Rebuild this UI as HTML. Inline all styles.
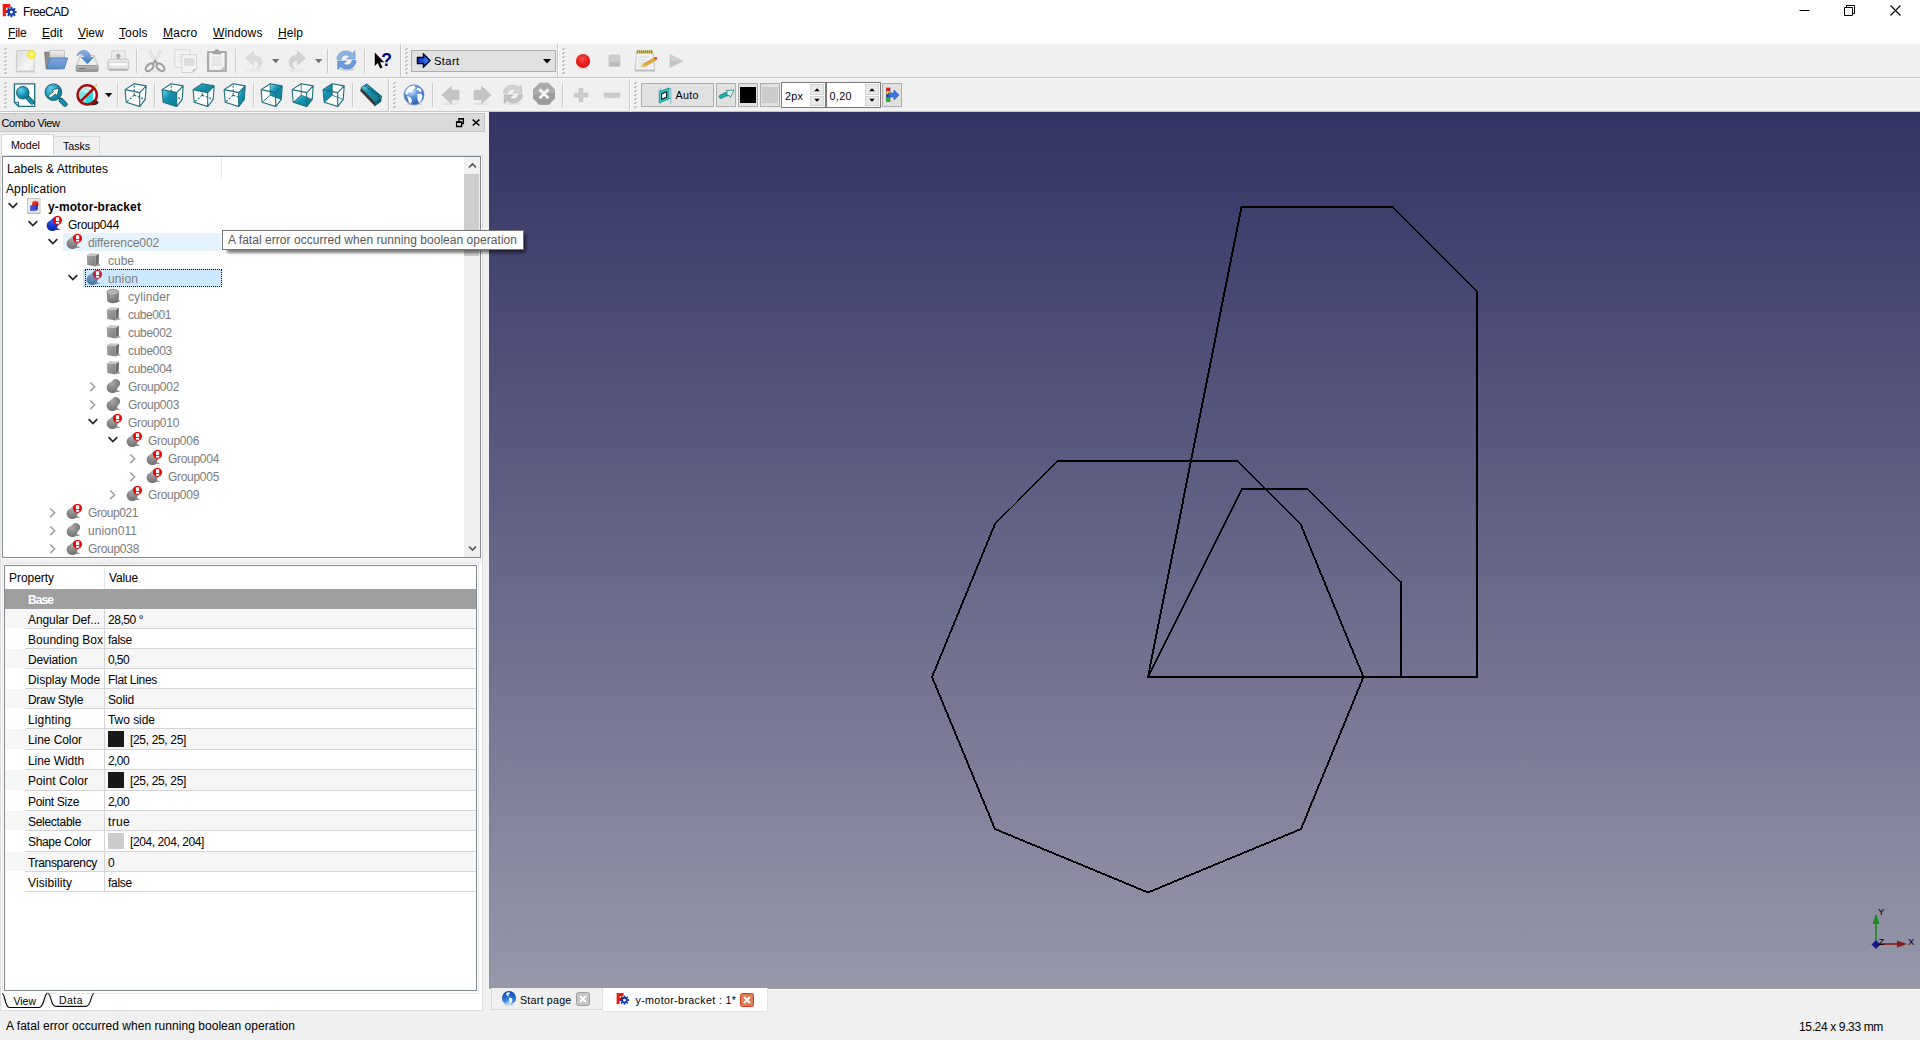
<!DOCTYPE html>
<html><head><meta charset="utf-8"><title>FreeCAD</title>
<style>
html,body{margin:0;padding:0;}
body{width:1920px;height:1040px;overflow:hidden;background:#f0f0f0;position:relative;font-family:"Liberation Sans",sans-serif;font-size:12px;color:#000;}
.t{position:absolute;white-space:nowrap;}
.b{position:absolute;box-sizing:border-box;}
u{text-decoration:underline;text-underline-offset:1px;}
</style></head><body>
<div class="b" style="left:0px;top:0px;width:1920px;height:43px;background:#fff;"></div>
<div class="t" style="left:23px;top:4px;height:16px;line-height:16px;font-size:12px;color:#000;letter-spacing:-0.644px;">FreeCAD</div>
<svg class="b" style="left:1790px;top:0px" width="130" height="22" viewBox="0 0 130 22"><path d="M9.5 10.5h10" stroke="#000" stroke-width="1" fill="none"/>
<path d="M54.5 7.5h8v8h-8z M56.5 7.5v-2h8v8h-2" stroke="#000" stroke-width="1" fill="none"/>
<path d="M100.5 5.5l10 10M110.5 5.5l-10 10" stroke="#000" stroke-width="1.1" fill="none"/></svg>
<div class="t" style="left:8px;top:25px;height:16px;line-height:16px;font-size:12px;color:#000;letter-spacing:-0.209px;"><u>F</u>ile</div>
<div class="t" style="left:42px;top:25px;height:16px;line-height:16px;font-size:12px;color:#000;letter-spacing:-0.045px;"><u>E</u>dit</div>
<div class="t" style="left:78px;top:25px;height:16px;line-height:16px;font-size:12px;color:#000;letter-spacing:-0.073px;"><u>V</u>iew</div>
<div class="t" style="left:119px;top:25px;height:16px;line-height:16px;font-size:12px;color:#000;letter-spacing:0.098px;"><u>T</u>ools</div>
<div class="t" style="left:163px;top:25px;height:16px;line-height:16px;font-size:12px;color:#000;letter-spacing:0.232px;"><u>M</u>acro</div>
<div class="t" style="left:213px;top:25px;height:16px;line-height:16px;font-size:12px;color:#000;letter-spacing:0.117px;"><u>W</u>indows</div>
<div class="t" style="left:278px;top:25px;height:16px;line-height:16px;font-size:12px;color:#000;letter-spacing:0.080px;"><u>H</u>elp</div>
<div class="b" style="left:0px;top:43px;width:1920px;height:1px;background:#fafafa;"></div>
<div class="b" style="left:0px;top:77px;width:1920px;height:1px;background:#c5c5c5;"></div>
<div class="b" style="left:0px;top:78px;width:1920px;height:1px;background:#fafafa;"></div>
<div class="b" style="left:0px;top:111px;width:1920px;height:1px;background:#c5c5c5;"></div>
<div class="b" style="left:0px;top:112px;width:1920px;height:1px;background:#fafafa;"></div>
<div class="b" style="left:5px;top:48px;width:2px;height:1px;background:#c4c4c4;"></div>
<div class="b" style="left:4px;top:49px;width:2px;height:1px;background:#b4b4b4;"></div>
<div class="b" style="left:5px;top:52px;width:2px;height:1px;background:#c4c4c4;"></div>
<div class="b" style="left:4px;top:53px;width:2px;height:1px;background:#b4b4b4;"></div>
<div class="b" style="left:5px;top:56px;width:2px;height:1px;background:#c4c4c4;"></div>
<div class="b" style="left:4px;top:57px;width:2px;height:1px;background:#b4b4b4;"></div>
<div class="b" style="left:5px;top:60px;width:2px;height:1px;background:#c4c4c4;"></div>
<div class="b" style="left:4px;top:61px;width:2px;height:1px;background:#b4b4b4;"></div>
<div class="b" style="left:5px;top:64px;width:2px;height:1px;background:#c4c4c4;"></div>
<div class="b" style="left:4px;top:65px;width:2px;height:1px;background:#b4b4b4;"></div>
<div class="b" style="left:5px;top:68px;width:2px;height:1px;background:#c4c4c4;"></div>
<div class="b" style="left:4px;top:69px;width:2px;height:1px;background:#b4b4b4;"></div>
<div class="b" style="left:5px;top:72px;width:2px;height:1px;background:#c4c4c4;"></div>
<div class="b" style="left:4px;top:73px;width:2px;height:1px;background:#b4b4b4;"></div>
<div class="b" style="left:406px;top:48px;width:2px;height:1px;background:#c4c4c4;"></div>
<div class="b" style="left:405px;top:49px;width:2px;height:1px;background:#b4b4b4;"></div>
<div class="b" style="left:406px;top:52px;width:2px;height:1px;background:#c4c4c4;"></div>
<div class="b" style="left:405px;top:53px;width:2px;height:1px;background:#b4b4b4;"></div>
<div class="b" style="left:406px;top:56px;width:2px;height:1px;background:#c4c4c4;"></div>
<div class="b" style="left:405px;top:57px;width:2px;height:1px;background:#b4b4b4;"></div>
<div class="b" style="left:406px;top:60px;width:2px;height:1px;background:#c4c4c4;"></div>
<div class="b" style="left:405px;top:61px;width:2px;height:1px;background:#b4b4b4;"></div>
<div class="b" style="left:406px;top:64px;width:2px;height:1px;background:#c4c4c4;"></div>
<div class="b" style="left:405px;top:65px;width:2px;height:1px;background:#b4b4b4;"></div>
<div class="b" style="left:406px;top:68px;width:2px;height:1px;background:#c4c4c4;"></div>
<div class="b" style="left:405px;top:69px;width:2px;height:1px;background:#b4b4b4;"></div>
<div class="b" style="left:406px;top:72px;width:2px;height:1px;background:#c4c4c4;"></div>
<div class="b" style="left:405px;top:73px;width:2px;height:1px;background:#b4b4b4;"></div>
<div class="b" style="left:563px;top:48px;width:2px;height:1px;background:#c4c4c4;"></div>
<div class="b" style="left:562px;top:49px;width:2px;height:1px;background:#b4b4b4;"></div>
<div class="b" style="left:563px;top:52px;width:2px;height:1px;background:#c4c4c4;"></div>
<div class="b" style="left:562px;top:53px;width:2px;height:1px;background:#b4b4b4;"></div>
<div class="b" style="left:563px;top:56px;width:2px;height:1px;background:#c4c4c4;"></div>
<div class="b" style="left:562px;top:57px;width:2px;height:1px;background:#b4b4b4;"></div>
<div class="b" style="left:563px;top:60px;width:2px;height:1px;background:#c4c4c4;"></div>
<div class="b" style="left:562px;top:61px;width:2px;height:1px;background:#b4b4b4;"></div>
<div class="b" style="left:563px;top:64px;width:2px;height:1px;background:#c4c4c4;"></div>
<div class="b" style="left:562px;top:65px;width:2px;height:1px;background:#b4b4b4;"></div>
<div class="b" style="left:563px;top:68px;width:2px;height:1px;background:#c4c4c4;"></div>
<div class="b" style="left:562px;top:69px;width:2px;height:1px;background:#b4b4b4;"></div>
<div class="b" style="left:563px;top:72px;width:2px;height:1px;background:#c4c4c4;"></div>
<div class="b" style="left:562px;top:73px;width:2px;height:1px;background:#b4b4b4;"></div>
<div class="b" style="left:5px;top:82px;width:2px;height:1px;background:#c4c4c4;"></div>
<div class="b" style="left:4px;top:83px;width:2px;height:1px;background:#b4b4b4;"></div>
<div class="b" style="left:5px;top:86px;width:2px;height:1px;background:#c4c4c4;"></div>
<div class="b" style="left:4px;top:87px;width:2px;height:1px;background:#b4b4b4;"></div>
<div class="b" style="left:5px;top:90px;width:2px;height:1px;background:#c4c4c4;"></div>
<div class="b" style="left:4px;top:91px;width:2px;height:1px;background:#b4b4b4;"></div>
<div class="b" style="left:5px;top:94px;width:2px;height:1px;background:#c4c4c4;"></div>
<div class="b" style="left:4px;top:95px;width:2px;height:1px;background:#b4b4b4;"></div>
<div class="b" style="left:5px;top:98px;width:2px;height:1px;background:#c4c4c4;"></div>
<div class="b" style="left:4px;top:99px;width:2px;height:1px;background:#b4b4b4;"></div>
<div class="b" style="left:5px;top:102px;width:2px;height:1px;background:#c4c4c4;"></div>
<div class="b" style="left:4px;top:103px;width:2px;height:1px;background:#b4b4b4;"></div>
<div class="b" style="left:5px;top:106px;width:2px;height:1px;background:#c4c4c4;"></div>
<div class="b" style="left:4px;top:107px;width:2px;height:1px;background:#b4b4b4;"></div>
<div class="b" style="left:394px;top:82px;width:2px;height:1px;background:#c4c4c4;"></div>
<div class="b" style="left:393px;top:83px;width:2px;height:1px;background:#b4b4b4;"></div>
<div class="b" style="left:394px;top:86px;width:2px;height:1px;background:#c4c4c4;"></div>
<div class="b" style="left:393px;top:87px;width:2px;height:1px;background:#b4b4b4;"></div>
<div class="b" style="left:394px;top:90px;width:2px;height:1px;background:#c4c4c4;"></div>
<div class="b" style="left:393px;top:91px;width:2px;height:1px;background:#b4b4b4;"></div>
<div class="b" style="left:394px;top:94px;width:2px;height:1px;background:#c4c4c4;"></div>
<div class="b" style="left:393px;top:95px;width:2px;height:1px;background:#b4b4b4;"></div>
<div class="b" style="left:394px;top:98px;width:2px;height:1px;background:#c4c4c4;"></div>
<div class="b" style="left:393px;top:99px;width:2px;height:1px;background:#b4b4b4;"></div>
<div class="b" style="left:394px;top:102px;width:2px;height:1px;background:#c4c4c4;"></div>
<div class="b" style="left:393px;top:103px;width:2px;height:1px;background:#b4b4b4;"></div>
<div class="b" style="left:394px;top:106px;width:2px;height:1px;background:#c4c4c4;"></div>
<div class="b" style="left:393px;top:107px;width:2px;height:1px;background:#b4b4b4;"></div>
<div class="b" style="left:635px;top:82px;width:2px;height:1px;background:#c4c4c4;"></div>
<div class="b" style="left:634px;top:83px;width:2px;height:1px;background:#b4b4b4;"></div>
<div class="b" style="left:635px;top:86px;width:2px;height:1px;background:#c4c4c4;"></div>
<div class="b" style="left:634px;top:87px;width:2px;height:1px;background:#b4b4b4;"></div>
<div class="b" style="left:635px;top:90px;width:2px;height:1px;background:#c4c4c4;"></div>
<div class="b" style="left:634px;top:91px;width:2px;height:1px;background:#b4b4b4;"></div>
<div class="b" style="left:635px;top:94px;width:2px;height:1px;background:#c4c4c4;"></div>
<div class="b" style="left:634px;top:95px;width:2px;height:1px;background:#b4b4b4;"></div>
<div class="b" style="left:635px;top:98px;width:2px;height:1px;background:#c4c4c4;"></div>
<div class="b" style="left:634px;top:99px;width:2px;height:1px;background:#b4b4b4;"></div>
<div class="b" style="left:635px;top:102px;width:2px;height:1px;background:#c4c4c4;"></div>
<div class="b" style="left:634px;top:103px;width:2px;height:1px;background:#b4b4b4;"></div>
<div class="b" style="left:635px;top:106px;width:2px;height:1px;background:#c4c4c4;"></div>
<div class="b" style="left:634px;top:107px;width:2px;height:1px;background:#b4b4b4;"></div>
<div class="b" style="left:136px;top:49px;width:1px;height:24px;background:#cacaca;"></div>
<div class="b" style="left:137px;top:49px;width:1px;height:24px;background:#f8f8f8;"></div>
<div class="b" style="left:235px;top:49px;width:1px;height:24px;background:#cacaca;"></div>
<div class="b" style="left:236px;top:49px;width:1px;height:24px;background:#f8f8f8;"></div>
<div class="b" style="left:327px;top:49px;width:1px;height:24px;background:#cacaca;"></div>
<div class="b" style="left:328px;top:49px;width:1px;height:24px;background:#f8f8f8;"></div>
<div class="b" style="left:364px;top:49px;width:1px;height:24px;background:#cacaca;"></div>
<div class="b" style="left:365px;top:49px;width:1px;height:24px;background:#f8f8f8;"></div>
<div class="b" style="left:117px;top:83px;width:1px;height:24px;background:#cacaca;"></div>
<div class="b" style="left:118px;top:83px;width:1px;height:24px;background:#f8f8f8;"></div>
<div class="b" style="left:154px;top:83px;width:1px;height:24px;background:#cacaca;"></div>
<div class="b" style="left:155px;top:83px;width:1px;height:24px;background:#f8f8f8;"></div>
<div class="b" style="left:253px;top:83px;width:1px;height:24px;background:#cacaca;"></div>
<div class="b" style="left:254px;top:83px;width:1px;height:24px;background:#f8f8f8;"></div>
<div class="b" style="left:352px;top:83px;width:1px;height:24px;background:#cacaca;"></div>
<div class="b" style="left:353px;top:83px;width:1px;height:24px;background:#f8f8f8;"></div>
<div class="b" style="left:432px;top:83px;width:1px;height:24px;background:#cacaca;"></div>
<div class="b" style="left:433px;top:83px;width:1px;height:24px;background:#f8f8f8;"></div>
<div class="b" style="left:562px;top:83px;width:1px;height:24px;background:#cacaca;"></div>
<div class="b" style="left:563px;top:83px;width:1px;height:24px;background:#f8f8f8;"></div>
<div class="b" style="left:400px;top:44px;width:1px;height:33px;background:#c5c5c5;"></div>
<div class="b" style="left:401px;top:44px;width:1px;height:33px;background:#fff;"></div>
<div class="b" style="left:557px;top:44px;width:1px;height:33px;background:#c5c5c5;"></div>
<div class="b" style="left:558px;top:44px;width:1px;height:33px;background:#fff;"></div>
<div class="b" style="left:388px;top:79px;width:1px;height:33px;background:#c5c5c5;"></div>
<div class="b" style="left:389px;top:79px;width:1px;height:33px;background:#fff;"></div>
<div class="b" style="left:629px;top:79px;width:1px;height:33px;background:#c5c5c5;"></div>
<div class="b" style="left:630px;top:79px;width:1px;height:33px;background:#fff;"></div>
<div class="b" style="left:411px;top:50px;width:145px;height:22px;background:#e1e1e1;border:1px solid #adadad;"></div>
<div class="t" style="left:434px;top:53.2px;height:16px;line-height:16px;font-size:11.2px;color:#000;letter-spacing:0.369px;">Start</div>
<svg class="b" style="left:541.5px;top:58.3px" width="10" height="6" viewBox="0 0 10 6"><path d="M1 1h8l-4 4.5z" fill="#000"/></svg>
<div class="b" style="left:641px;top:83px;width:73px;height:24px;background:#e1e1e1;border:1px solid #adadad;"></div>
<div class="t" style="left:675.5px;top:86.8px;height:16px;line-height:16px;font-size:10.8px;color:#000;letter-spacing:0.246px;">Auto</div>
<div class="b" style="left:716px;top:83px;width:20px;height:24px;background:#e1e1e1;border:1px solid #adadad;"></div>
<div class="b" style="left:738px;top:83px;width:20px;height:24px;background:#e1e1e1;border:1px solid #adadad;"></div>
<div class="b" style="left:740px;top:87px;width:16px;height:16px;background:#000;"></div>
<div class="b" style="left:760px;top:83px;width:20px;height:24px;background:#e1e1e1;border:1px solid #adadad;"></div>
<div class="b" style="left:762px;top:87px;width:16px;height:16px;background:#cccccc;"></div>
<div class="b" style="left:781px;top:82px;width:45px;height:26px;background:#fff;border:1px solid #7a7a7a;"></div>
<div class="t" style="left:785px;top:88.2px;height:16px;line-height:16px;font-size:10.8px;color:#000;letter-spacing:0.196px;">2px</div>
<div class="b" style="left:826px;top:82px;width:55px;height:26px;background:#fff;border:1px solid #7a7a7a;"></div>
<div class="t" style="left:829.5px;top:88.2px;height:16px;line-height:16px;font-size:10.8px;color:#000;letter-spacing:0.370px;">0,20</div>
<div class="b" style="left:810px;top:84px;width:14px;height:11px;background:#e9e9e9;border:1px solid #d4d4d4;"></div>
<div class="b" style="left:810px;top:96px;width:14px;height:10px;background:#e9e9e9;border:1px solid #d4d4d4;"></div>
<svg class="b" style="left:813px;top:87px" width="8" height="16" viewBox="0 0 8 16"><path d="M1.200 4.200l2.800-3 2.800 3z M1.200 11.800l2.800 3 2.800-3z" fill="#000"/></svg>
<div class="b" style="left:865px;top:84px;width:14px;height:11px;background:#e9e9e9;border:1px solid #d4d4d4;"></div>
<div class="b" style="left:865px;top:96px;width:14px;height:10px;background:#e9e9e9;border:1px solid #d4d4d4;"></div>
<svg class="b" style="left:868px;top:87px" width="8" height="16" viewBox="0 0 8 16"><path d="M1.200 4.200l2.800-3 2.800 3z M1.200 11.800l2.800 3 2.800-3z" fill="#000"/></svg>
<div class="b" style="left:882px;top:83px;width:20px;height:24px;background:#e1e1e1;border:1px solid #adadad;"></div>
<svg width="0" height="0" style="position:absolute"><defs>
<linearGradient id="gTeal" x1="0" y1="0" x2="1" y2="1"><stop offset="0" stop-color="#7cdcf8"/><stop offset=".4" stop-color="#1593b0"/><stop offset="1" stop-color="#0b7d98"/></linearGradient>
<radialGradient id="gTealR" cx=".35" cy=".3" r=".8"><stop offset="0" stop-color="#66d2f0"/><stop offset=".6" stop-color="#1290ad"/><stop offset="1" stop-color="#0a7892"/></radialGradient>
<linearGradient id="gPage" x1="0" y1="0" x2="1" y2="1"><stop offset="0" stop-color="#dcdcdc"/><stop offset=".7" stop-color="#f6f6f6"/><stop offset="1" stop-color="#e6e6e6"/></linearGradient>
<radialGradient id="gGlow" cx=".5" cy=".5" r=".5"><stop offset="0" stop-color="#fffff0"/><stop offset=".3" stop-color="#f8f060"/><stop offset=".75" stop-color="#f0e838" stop-opacity=".9"/><stop offset="1" stop-color="#f0e838" stop-opacity="0"/></radialGradient>
<linearGradient id="gBlueF" x1="0" y1="0" x2="0" y2="1"><stop offset="0" stop-color="#7fa8dc"/><stop offset="1" stop-color="#5b8ccc"/></linearGradient>
<linearGradient id="gGreyV" x1="0" y1="0" x2="0" y2="1"><stop offset="0" stop-color="#f4f4f4"/><stop offset="1" stop-color="#b4b4b4"/></linearGradient>
<linearGradient id="gDrive" x1="0" y1="0" x2="0" y2="1"><stop offset="0" stop-color="#bdbdbd"/><stop offset="1" stop-color="#8f8f8f"/></linearGradient>
<linearGradient id="gBlueA" x1="0" y1="0" x2="0" y2="1"><stop offset="0" stop-color="#8db5e4"/><stop offset="1" stop-color="#3b73bd"/></linearGradient>
<radialGradient id="gRed" cx=".45" cy=".35" r=".7"><stop offset="0" stop-color="#f24a4a"/><stop offset=".6" stop-color="#e81c1c"/><stop offset="1" stop-color="#d61414"/></radialGradient>
<radialGradient id="gGlobe" cx=".38" cy=".3" r=".75"><stop offset="0" stop-color="#d6e8fa"/><stop offset=".45" stop-color="#5a93d6"/><stop offset="1" stop-color="#2a5cab"/></radialGradient>
<radialGradient id="gGlobe2" cx=".5" cy=".95" r=".95"><stop offset="0" stop-color="#c8f0ff"/><stop offset=".35" stop-color="#3c8ae6"/><stop offset="1" stop-color="#0c3ca8"/></radialGradient>
<linearGradient id="gStartA" x1="0" y1="0" x2="1" y2="0"><stop offset="0" stop-color="#0a2ec8"/><stop offset="1" stop-color="#3c8cff"/></linearGradient>
<radialGradient id="gBlob" cx=".4" cy=".3" r=".8"><stop offset="0" stop-color="#ababab"/><stop offset=".6" stop-color="#808080"/><stop offset="1" stop-color="#666"/></radialGradient>
<radialGradient id="gBlobB" cx=".4" cy=".3" r=".8"><stop offset="0" stop-color="#3c5cf0"/><stop offset=".6" stop-color="#1030c0"/><stop offset="1" stop-color="#081c90"/></radialGradient>
<radialGradient id="gBlobS" cx=".4" cy=".3" r=".8"><stop offset="0" stop-color="#7fa0c4"/><stop offset=".6" stop-color="#5a80a8"/><stop offset="1" stop-color="#46688c"/></radialGradient>
<linearGradient id="gCubeF" x1="0" y1="0" x2="1" y2="1"><stop offset="0" stop-color="#a8a8a8"/><stop offset="1" stop-color="#7c7c7c"/></linearGradient>
</defs></svg>
<svg class="b" style="left:13px;top:49px" width="24" height="24" viewBox="0 0 24 24"><path d="M2.500 22.800h19.500" stroke="#bdbdbd" stroke-width="1"/>
<rect x="3.400" y="1.500" width="17.800" height="20.600" rx="1" fill="url(#gPage)" stroke="#c8c8c8"/>
<path d="M5 6v1.200M5 11v1.200M5 16v1.200" stroke="#d0d0d0" stroke-width=".8"/>
<circle cx="18.400" cy="5.600" r="5.300" fill="url(#gGlow)"/></svg>
<svg class="b" style="left:44px;top:49px" width="24" height="24" viewBox="0 0 24 24"><path d="M.6 3h4.600l1.200 1.300h9v15.500h-13.300z" fill="#8c8c8c" stroke="#787878" stroke-width=".7"/>
<path d="M5.300 1.600l15-.5 .5 12.500h-14.500z" fill="url(#gGreyV)" stroke="#a6a6a6" stroke-width=".6"/>
<path d="M6 9h17.600l-3.500 10.800h-17.300z" fill="url(#gBlueF)" stroke="#4a7cc0" stroke-width=".9"/></svg>
<svg class="b" style="left:75px;top:49px" width="24" height="24" viewBox="0 0 24 24"><path d="M5.500 6.300h13.500l4 10.500h-21.500z" fill="#ececec" stroke="#b4b4b4" stroke-width=".8"/>
<rect x="1.200" y="16.500" width="21.900" height="6" rx="1.200" fill="url(#gDrive)" stroke="#8c8c8c" stroke-width=".8"/>
<rect x="3.800" y="19" width="6.500" height="1.200" fill="#7c7c7c"/>
<path d="M2 7c1-5.500 9.500-8.500 13 -1.500l.2 2.800h3.400l-6.200 6.500-6.400-6.500h3.600c-.3-3.500-4.600-5-7.600-1.300z" fill="url(#gBlueA)" stroke="#3f74ba" stroke-width=".5"/></svg>
<svg class="b" style="left:106px;top:49px" width="24" height="24" viewBox="0 0 24 24"><rect x="5.700" y="1.800" width="13.300" height="9.500" fill="#ededed" stroke="#d2d2d2"/>
<path d="M12.300 4l3.300 3.500h-1.900v3h-2.800v-3h-1.900z" fill="#acacac"/>
<path d="M1.800 13c0-2 1.200-3 2.700-3h15.600c1.500 0 2.700 1 2.700 3v6.500c0 1.200-.6 2-1.800 2h-17.400c-1.200 0-1.800-.8-1.800-2z" fill="#e6e6e6" stroke="#c0c0c0" stroke-width=".9"/>
<path d="M4.200 13.700h16.500" stroke="#bdbdbd" stroke-width=".7"/>
<rect x="4.200" y="14" width="16.500" height="2.600" rx="1.200" fill="#fafafa"/>
<path d="M2.700 20.500h19.200" stroke="#b4b4b4" stroke-width="1.800"/></svg>
<svg class="b" style="left:143px;top:49px" width="24" height="24" viewBox="0 0 24 24"><path d="M6.200 .9l6.800 13.500M18 .9l-6.800 13.500" stroke="#cfcfcf" stroke-width="2.600" fill="none"/>
<path d="M6.200 .9l6.800 13.500M18 .9l-6.800 13.500" stroke="#f2f2f2" stroke-width="1.200" fill="none"/>
<ellipse cx="6.600" cy="18.300" rx="4.700" ry="2.900" transform="rotate(-45 6.600 18.300)" fill="none" stroke="#9e9e9e" stroke-width="2.100"/>
<ellipse cx="17.500" cy="18.300" rx="4.700" ry="2.900" transform="rotate(45 17.500 18.300)" fill="none" stroke="#9e9e9e" stroke-width="2.100"/>
<path d="M9.700 15.500l2.400-3.800 2.400 3.800" stroke="#9e9e9e" stroke-width="1.800" fill="none"/>
<ellipse cx="12" cy="22" rx="4" ry=".8" fill="#e2e2e2"/></svg>
<svg class="b" style="left:174px;top:49px" width="24" height="24" viewBox="0 0 24 24"><rect x=".8" y=".8" width="15.500" height="17.500" fill="#f3f3f3" stroke="#d6d6d6"/>
<path d="M3.500 5.500h9M3.500 7.800h9M3.500 10.100h9M3.500 12.400h5" stroke="#dcdcdc" stroke-width=".8"/>
<path d="M7.800 5.700h14.700v14.300l-4 3.500h-10.700z" fill="#f3f3f3" stroke="#d2d2d2"/>
<rect x="10" y="9.200" width="10.300" height="7.500" fill="#d8d8d8"/>
<path d="M10 11.100h10.300M10 13h10.300M10 14.900h10.300" stroke="#e2e2e2" stroke-width=".5"/>
<path d="M22.500 20l-4 3.500l.3-3.300z" fill="#b4b4b4"/></svg>
<svg class="b" style="left:205px;top:49px" width="24" height="24" viewBox="0 0 24 24"><rect x="1.900" y="2" width="20" height="21" rx="1" fill="#acacac"/>
<rect x="4.200" y="4" width="15.400" height="17" fill="#f1f1f1"/>
<path d="M7.500 5.300v-2.800h2l.5-2h3.900l.5 2h2v2.800z" fill="#a2a2a2"/>
<rect x="7.300" y="7.500" width="9.500" height="9.300" fill="#e4e4e4"/>
<path d="M7.300 9.700h9.500M7.300 12h9.500M7.300 14.300h9.500" stroke="#ededed" stroke-width=".6"/>
<path d="M19.600 17v4h-4.200z" fill="#c2c2c2"/></svg>
<svg class="b" style="left:242px;top:48px" width="24" height="24" viewBox="0 0 24 24"><ellipse cx="12" cy="22.300" rx="9" ry="1.800" fill="#e8e8e8"/>
<path d="M3.500 10.200l8-7v4c5 .2 8.500 3 8.500 7 0 3.500-2.500 5.800-6 6.500 2.200-1.500 3-3 2.600-5-.4-2-2.200-3-5.100-3v4.500z" fill="#dadada" stroke="#d2d2d2" stroke-width=".6"/></svg>
<svg class="b" style="left:285px;top:48px" width="24" height="24" viewBox="0 0 24 24"><ellipse cx="12" cy="22.300" rx="9" ry="1.800" fill="#e8e8e8"/>
<path d="M20.500 10.200l-8-7v4c-5 .2-8.500 3-8.500 7 0 3.500 2.500 5.800 6 6.500-2.200-1.500-3-3-2.600-5 .4-2 2.200-3 5.100-3v4.500z" fill="#d2d2d2" stroke="#c8c8c8" stroke-width=".6"/></svg>
<svg class="b" style="left:272px;top:59px" width="8" height="5" viewBox="0 0 8 5"><path d="M0 0h7.400l-3.700 4.200z" fill="#6e6e6e"/></svg>
<svg class="b" style="left:315px;top:59px" width="8" height="5" viewBox="0 0 8 5"><path d="M0 0h7.400l-3.700 4.200z" fill="#6e6e6e"/></svg>
<svg class="b" style="left:334px;top:47.6px" width="24" height="24" viewBox="0 0 24 24"><ellipse cx="13" cy="21.500" rx="8" ry="1.600" fill="#d4d4d4"/>
<path d="M3 11.500c0-5.500 4.500-8.500 9-8.500 2.500 0 4.500 .8 6.300 2.300l2.700-2.500v8.200h-8.500l3-2.800c-1-.9-2.200-1.300-3.500-1.300-2.500 0-4.600 1.700-5 4.600z" fill="#8fb4e3" stroke="#5c8fd0" stroke-width=".6"/>
<path d="M22 12.500c0 5.500-4.500 8.500-9 8.500-2.500 0-4.500-.8-6.300-2.300l-3 2.800v-8.500h8.800l-3 2.800c1 .9 2.200 1.300 3.500 1.300 2.500 0 4.600-1.700 5-4.600z" fill="#6b9bd8" stroke="#4a80c6" stroke-width=".6"/></svg>
<svg class="b" style="left:371px;top:49px" width="24" height="24" viewBox="0 0 24 24"><path d="M3.800 3.500v13.400l3-2.900 2.400 5.500 2.300-1-2.500-5.300h4.200z" fill="#000"/>
<text x="10.300" y="16.600" font-family="Liberation Sans, sans-serif" font-weight="bold" font-size="17.500" fill="#00008b">?</text></svg>
<svg class="b" style="left:571px;top:49px" width="24" height="24" viewBox="0 0 24 24"><ellipse cx="12" cy="19.800" rx="6" ry="1" fill="#e0e0e0"/><circle cx="12" cy="12" r="7.100" fill="url(#gRed)"/></svg>
<svg class="b" style="left:602px;top:49px" width="24" height="24" viewBox="0 0 24 24"><rect x="7" y="6" width="11" height="11.500" rx=".8" fill="#cfcfcf" stroke="#c2c2c2" stroke-width=".6"/><path d="M7.500 13.500l10-2v5.500h-10z" fill="#bcbcbc"/></svg>
<svg class="b" style="left:633px;top:49px" width="24" height="24" viewBox="0 0 24 24"><path d="M2 21.500h20" stroke="#b4b4b4" stroke-width="1.800"/>
<path d="M3.500 3.500h16.500l1.500 17.500h-19.500z" fill="#f2f2f2" stroke="#c0c0c0" stroke-width=".9"/>
<rect x="3.600" y="1.600" width="16.400" height="3" fill="#c8b44a"/>
<path d="M4.500 1v3M6.500 1v3M8.500 1v3M10.500 1v3M12.500 1v3M14.500 1v3M16.500 1v3M18.500 1v3" stroke="#9c8a2a" stroke-width=".9"/>
<path d="M5.500 8h11M5.500 11h9M5.500 14h11M5.500 17h8" stroke="#d8d8d8" stroke-width="1.100"/>
<path d="M8.500 17.800l1.700-2.600 11.300-6.600 1.400 2.400-11.300 6.600z" fill="#e8a838" stroke="#b87818" stroke-width=".5"/>
<path d="M21.500 8.600l1.400 2.400 1-.6c.5-.3.300-1.200 0-1.700s-.9-1-1.400-.7z" fill="#e03030"/>
<path d="M8.500 17.800l1.700-2.600 1.400 2.400z" fill="#f0d8a8"/></svg>
<svg class="b" style="left:663px;top:49px" width="24" height="24" viewBox="0 0 24 24"><path d="M7 5.500l13 6.500-13 6.500z" fill="#cfcfcf" stroke="#c4c4c4" stroke-width=".6"/><path d="M7 12.500l13-.5-13 6.500z" fill="#c2c2c2"/></svg>
<svg class="b" style="left:13px;top:83px" width="24" height="24" viewBox="0 0 24 24"><path d="M1.400 .9h20.300v22.400h-16.300l-4-4z" fill="#fff" stroke="#1b6e80" stroke-width="1.300"/>
<path d="M1.400 19.300h4v4" fill="none" stroke="#1b6e80" stroke-width="1.100"/>
<path d="M13.800 13.800l1.500 1.500" stroke="#1b6e80" stroke-width="2.200"/>
<path d="M15.300 15.300l3.700 3.900" stroke="#12566a" stroke-width="4.800" stroke-linecap="round"/>
<path d="M15.300 15.300l3.700 3.900" stroke="#1792ae" stroke-width="3.200" stroke-linecap="round"/>
<circle cx="9.800" cy="9.700" r="6.300" fill="url(#gTealR)" stroke="#12566a" stroke-width=".9"/></svg>
<svg class="b" style="left:44px;top:83px" width="24" height="24" viewBox="0 0 24 24"><path d="M15 15l2.200 2.200" stroke="#1b6e80" stroke-width="2.400"/>
<path d="M17.300 17.500l3.700 3.700" stroke="#12566a" stroke-width="5" stroke-linecap="round"/>
<path d="M17.300 17.500l3.700 3.700" stroke="#1792ae" stroke-width="3.400" stroke-linecap="round"/>
<circle cx="9.400" cy="9.200" r="8.300" fill="url(#gTealR)" stroke="#12566a" stroke-width=".9"/>
<path d="M15 5.300l-1.800 7.500-1.800-1.800-5.300 4-1.800-2.200 5.300-4.200-1.800-1.800z" fill="#fff" stroke="#114a58" stroke-width=".8"/></svg>
<svg class="b" style="left:75px;top:83px" width="24" height="24" viewBox="0 0 24 24"><ellipse cx="17.500" cy="19.500" rx="6" ry="2.800" fill="#222"/>
<path d="M3.500 8.300l6-3.300 8.500 2.300v11.200l-7 3.300-7.500-3.800z" fill="#30d8dc"/>
<path d="M3.500 8.300l6-3.300 8.500 2.300-7 3.200z" fill="#b4f0f0"/>
<path d="M3.500 8.300l7.500 2.200v11.300l-7.500-3.800z" fill="#7ce6e8"/>
<path d="M18 8v8.500l1.800-1v-6.500z" fill="#fff"/>
<path d="M11.500 11l9.300-8.600" stroke="#f0e020" stroke-width="1.300"/>
<circle cx="21.300" cy="2.100" r=".8" fill="#f0a020"/>
<circle cx="12.200" cy="11.900" r="9.600" fill="none" stroke="#a80a0a" stroke-width="2.400"/>
<path d="M5.400 18.700l13.600-13.600" stroke="#a80a0a" stroke-width="2.400"/></svg>
<svg class="b" style="left:105px;top:93px" width="8" height="5" viewBox="0 0 8 5"><path d="M0 0h7.400l-3.700 4.200z" fill="#111"/></svg>
<svg class="b" style="left:123px;top:83px" width="24" height="24" viewBox="0 0 24 24"><polygon points="2.1,6.6 11.2,0.8 23.2,2.9 22.2,16.4 16.7,23.6 3.2,19.3" fill="#fff"/><path d="M11.2 12.2L11.2 0.8M11.2 12.2L3.2 19.3M11.2 12.2L22.2 16.4" stroke="#1b6e80" stroke-width="1.100" stroke-dasharray="2.200 1.500" fill="none"/><path d="M2.1 6.6 L11.2 0.8 L23.2 2.9 L22.2 16.4 L16.7 23.6 L3.2 19.3 Z M2.1 6.6L16.7 9.6L23.2 2.9 M16.7 9.6L16.7 23.6" stroke="#1b6e80" stroke-width="1.100" fill="none" stroke-linejoin="round"/></svg>
<svg class="b" style="left:160px;top:83px" width="24" height="24" viewBox="0 0 24 24"><polygon points="2.1,6.6 11.2,0.8 23.2,2.9 22.2,16.4 16.7,23.6 3.2,19.3" fill="#fff"/><path d="M11.2 12.2L11.2 0.8M11.2 12.2L3.2 19.3M11.2 12.2L22.2 16.4" stroke="#1b6e80" stroke-width="1.100" stroke-dasharray="2.200 1.500" fill="none"/><polygon points="2.1,6.6 16.7,9.6 16.7,23.6 3.2,19.3" fill="url(#gTeal)"/><path d="M2.1 6.6 L11.2 0.8 L23.2 2.9 L22.2 16.4 L16.7 23.6 L3.2 19.3 Z M2.1 6.6L16.7 9.6L23.2 2.9 M16.7 9.6L16.7 23.6" stroke="#1b6e80" stroke-width="1.100" fill="none" stroke-linejoin="round"/></svg>
<svg class="b" style="left:191px;top:83px" width="24" height="24" viewBox="0 0 24 24"><polygon points="2.1,6.6 11.2,0.8 23.2,2.9 22.2,16.4 16.7,23.6 3.2,19.3" fill="#fff"/><path d="M11.2 12.2L11.2 0.8M11.2 12.2L3.2 19.3M11.2 12.2L22.2 16.4" stroke="#1b6e80" stroke-width="1.100" stroke-dasharray="2.200 1.500" fill="none"/><polygon points="2.1,6.6 11.2,0.8 23.2,2.9 16.7,9.6" fill="url(#gTeal)"/><path d="M2.1 6.6 L11.2 0.8 L23.2 2.9 L22.2 16.4 L16.7 23.6 L3.2 19.3 Z M2.1 6.6L16.7 9.6L23.2 2.9 M16.7 9.6L16.7 23.6" stroke="#1b6e80" stroke-width="1.100" fill="none" stroke-linejoin="round"/></svg>
<svg class="b" style="left:222px;top:83px" width="24" height="24" viewBox="0 0 24 24"><polygon points="2.1,6.6 11.2,0.8 23.2,2.9 22.2,16.4 16.7,23.6 3.2,19.3" fill="#fff"/><path d="M11.2 12.2L11.2 0.8M11.2 12.2L3.2 19.3M11.2 12.2L22.2 16.4" stroke="#1b6e80" stroke-width="1.100" stroke-dasharray="2.200 1.500" fill="none"/><polygon points="16.7,9.6 23.2,2.9 22.2,16.4 16.7,23.6" fill="url(#gTeal)"/><path d="M2.1 6.6 L11.2 0.8 L23.2 2.9 L22.2 16.4 L16.7 23.6 L3.2 19.3 Z M2.1 6.6L16.7 9.6L23.2 2.9 M16.7 9.6L16.7 23.6" stroke="#1b6e80" stroke-width="1.100" fill="none" stroke-linejoin="round"/></svg>
<svg class="b" style="left:259px;top:83px" width="24" height="24" viewBox="0 0 24 24"><polygon points="2.1,6.6 11.2,0.8 23.2,2.9 22.2,16.4 16.7,23.6 3.2,19.3" fill="#fff"/><polygon points="11.2,0.8 23.2,2.9 22.2,16.4 11.2,12.2" fill="url(#gTeal)"/><path d="M11.2 12.2L11.2 0.8M11.2 12.2L3.2 19.3M11.2 12.2L22.2 16.4" stroke="#1b6e80" stroke-width="1" fill="none" opacity=".85"/><path d="M2.1 6.6 L11.2 0.8 L23.2 2.9 L22.2 16.4 L16.7 23.6 L3.2 19.3 Z M2.1 6.6L16.7 9.6L23.2 2.9 M16.7 9.6L16.7 23.6" stroke="#1b6e80" stroke-width="1.100" fill="none" stroke-linejoin="round"/></svg>
<svg class="b" style="left:290px;top:83px" width="24" height="24" viewBox="0 0 24 24"><polygon points="2.1,6.6 11.2,0.8 23.2,2.9 22.2,16.4 16.7,23.6 3.2,19.3" fill="#fff"/><polygon points="3.2,19.3 11.2,12.2 22.2,16.4 16.7,23.6" fill="url(#gTeal)"/><path d="M11.2 12.2L11.2 0.8M11.2 12.2L3.2 19.3M11.2 12.2L22.2 16.4" stroke="#1b6e80" stroke-width="1" fill="none" opacity=".85"/><path d="M2.1 6.6 L11.2 0.8 L23.2 2.9 L22.2 16.4 L16.7 23.6 L3.2 19.3 Z M2.1 6.6L16.7 9.6L23.2 2.9 M16.7 9.6L16.7 23.6" stroke="#1b6e80" stroke-width="1.100" fill="none" stroke-linejoin="round"/></svg>
<svg class="b" style="left:321px;top:83px" width="24" height="24" viewBox="0 0 24 24"><polygon points="2.1,6.6 11.2,0.8 23.2,2.9 22.2,16.4 16.7,23.6 3.2,19.3" fill="#fff"/><polygon points="2.1,6.6 11.2,0.8 11.2,12.2 3.2,19.3" fill="url(#gTeal)"/><path d="M11.2 12.2L11.2 0.8M11.2 12.2L3.2 19.3M11.2 12.2L22.2 16.4" stroke="#1b6e80" stroke-width="1" fill="none" opacity=".85"/><path d="M2.1 6.6 L11.2 0.8 L23.2 2.9 L22.2 16.4 L16.7 23.6 L3.2 19.3 Z M2.1 6.6L16.7 9.6L23.2 2.9 M16.7 9.6L16.7 23.6" stroke="#1b6e80" stroke-width="1.100" fill="none" stroke-linejoin="round"/></svg>
<svg class="b" style="left:359px;top:83px" width="24" height="24" viewBox="0 0 24 24"><path d="M2 4.600L16.200 18.600L15.700 23L1.200 7.900Z" fill="#383838"/><path d="M16.200 18.600L22.600 13.200L21.800 18.700L15.700 23Z" fill="#0c6880" stroke="#0a4c5c" stroke-width=".6"/><path d="M7.900 .8L22.600 13.200L16.200 18.600L2 4.600Z" fill="url(#gTeal)" stroke="#1b6e80" stroke-width=".8"/><path d="M8.31 1.90L5.62 3.63M9.92 3.26L8.24 4.34M11.53 4.61L8.84 6.34M13.14 5.97L11.46 7.05M14.75 7.32L12.06 9.06M16.35 8.68L14.67 9.76M17.96 10.04L15.27 11.77M19.57 11.39L17.89 12.48M21.18 12.75L18.49 14.48" stroke="#08303a" stroke-width=".9" fill="none"/><path d="M18.500 17.500l1.200 2.500M20.300 16l.8 2.200" stroke="#08303a" stroke-width=".7"/></svg>
<svg class="b" style="left:402px;top:83px" width="24" height="24" viewBox="0 0 24 24"><ellipse cx="12.500" cy="21.300" rx="8" ry="1.500" fill="#d6d6d6"/>
<circle cx="12" cy="11.800" r="10" fill="url(#gGlobe)" stroke="#5078b8" stroke-width=".6"/>
<path d="M5 6c2-2.500 5-3.500 7.500-3.500l1 2.500-2.500 1.500-1.500 2.500-3 .5-1.500 2.500-1.800-1.500c0-1.800.8-3.300 1.800-4.500zM15.500 4.500l3 1 1.500 3-2.500.5-1-1.500-2-.5zM5 13l3 1 2 3-1 4-2-1.500-1-3.500zM15 11l4-.5 1.500 2.500-1 4.500-2.500 2.500-1.500-4z" fill="#fff" opacity=".95"/></svg>
<svg class="b" style="left:439px;top:83px" width="24" height="24" viewBox="0 0 24 24"><ellipse cx="12" cy="20.800" rx="8" ry="1.400" fill="#e4e4e4"/><path d="M3 12l9.500-9v4.300h7.500v9.400h-7.500v4.300z" fill="#c4c4c4" stroke="#bcbcbc" stroke-width=".6"/></svg>
<svg class="b" style="left:470px;top:83px" width="24" height="24" viewBox="0 0 24 24"><ellipse cx="12" cy="20.800" rx="8" ry="1.400" fill="#e4e4e4"/><path d="M21 12l-9.500-9v4.300h-7.500v9.400h7.500v4.300z" fill="#c4c4c4" stroke="#bcbcbc" stroke-width=".6"/></svg>
<svg class="b" style="left:500px;top:82.4px" width="24" height="24" viewBox="0 0 24 24"><ellipse cx="13" cy="21.500" rx="8" ry="1.500" fill="#e2e2e2"/>
<path d="M3.500 11.500c0-5.500 4.500-8.500 9-8.500 2.500 0 4.500 .8 6.300 2.300l2.700-2.500v8.200h-8.500l3-2.800c-1-.9-2.200-1.300-3.500-1.300-2.500 0-4.600 1.700-5 4.600z" fill="#d2d2d2" stroke="#bcbcbc" stroke-width=".6"/>
<path d="M22.500 12.500c0 5.500-4.500 8.500-9 8.500-2.500 0-4.500-.8-6.300-2.300l-3 2.800v-8.500h8.800l-3 2.800c1 .9 2.200 1.300 3.500 1.300 2.500 0 4.600-1.700 5-4.600z" fill="#c2c2c2" stroke="#b4b4b4" stroke-width=".6"/></svg>
<svg class="b" style="left:532px;top:82px" width="24" height="24" viewBox="0 0 24 24"><ellipse cx="12" cy="21.500" rx="8" ry="1.300" fill="#e0e0e0"/>
<path d="M7.500 .8h9l6.500 6.500v9l-6.500 6.500h-9l-6.500-6.500v-9z" fill="#acacac"/>
<path d="M1 13.500l22-3v5.800l-6.500 6.500h-9l-6.500-6.500z" fill="#9c9c9c"/>
<path d="M7.500 7.300l9 9M16.500 7.300l-9 9" stroke="#f4f4f4" stroke-width="2.800"/></svg>
<svg class="b" style="left:569px;top:83px" width="24" height="24" viewBox="0 0 24 24"><path d="M10.100 5.300h3.800v4.900h4.900v3.800h-4.900v4.900h-3.800v-4.900h-4.900v-3.800h4.900z" fill="#cbcbcb" stroke="#bebebe" stroke-width=".6"/></svg>
<svg class="b" style="left:600px;top:83px" width="24" height="24" viewBox="0 0 24 24"><rect x="4" y="10" width="16" height="4.600" rx=".5" fill="#cbcbcb" stroke="#c0c0c0" stroke-width=".5"/></svg>
<svg class="b" style="left:657px;top:87px" width="16.5" height="16.5" viewBox="0 0 18 18"><path d="M3.500 1v17M1 4.500l14-3M15 1v17M1.500 15.500l14.500-3.500" stroke="#35a0aa" stroke-width=".8" opacity=".8"/>
<path d="M2.500 5.500l10.500-4.500v12l-10.500 4.500z" fill="#30c8cc" stroke="#148a90" stroke-width=".8"/>
<path d="M5 7.500l5.500-2.300v6l-5.500 2.300z" fill="#fff" stroke="#111" stroke-width="1.200"/></svg>
<svg class="b" style="left:718px;top:87px" width="17" height="16" viewBox="0 0 17 16"><path d="M8.300 3.600l7.700-.6-3.600 7.600-1.300-2.300-1.600 .8-1.600-3 1.600-.8z" fill="#d8f6f0" stroke="#1a8080" stroke-width=".8"/>
<path d="M1.800 8.300l6.200-3 1.600 3-6.200 3c-1.800.8-3.200-2-1.600-3z" fill="#12b4b4" stroke="#0c7878" stroke-width=".8"/></svg>
<svg class="b" style="left:884.5px;top:86px" width="16" height="18" viewBox="0 0 16 18"><rect x="1" y="1.500" width="4.500" height="14.500" fill="#777"/>
<rect x="1.500" y="2" width="3.500" height="3.300" fill="#f01010"/><rect x="1.500" y="5.300" width="3.500" height="3" fill="#f0e010"/><rect x="1.500" y="8.300" width="3.500" height="3.200" fill="#1030d0"/><rect x="1.500" y="11.500" width="3.500" height="3.500" fill="#10c020"/>
<path d="M3.500 7h5.500v-3l5 5-5 5v-3h-5.500z" fill="#3c78e0" stroke="#1c48b0" stroke-width=".6"/></svg>
<svg class="b" style="left:416px;top:53px" width="16" height="15" viewBox="0 0 16 15"><path d="M1.500 4.500h6v-3.500l6.500 6.500-6.500 6.500v-3.500h-6z" fill="url(#gStartA)" stroke="#0a0a1e" stroke-width="1.500" stroke-linejoin="miter"/></svg>
<svg class="b" style="left:2px;top:3px" width="16" height="16" viewBox="0 0 16 16"><path d="M.7 1h7.700v3.700h-4.500v2h3v2.800h-3v3.800h-3.200z" fill="#f21a0a"/><path d="M14.62 8.14 L14.62 9.96 L12.98 9.97 L12.58 10.93 L13.74 12.10 L12.45 13.39 L11.28 12.23 L10.32 12.63 L10.31 14.27 L8.49 14.27 L8.48 12.63 L7.52 12.23 L6.35 13.39 L5.06 12.10 L6.22 10.93 L5.82 9.97 L4.18 9.96 L4.18 8.14 L5.82 8.13 L6.22 7.17 L5.06 6.00 L6.35 4.71 L7.52 5.87 L8.48 5.47 L8.49 3.83 L10.31 3.83 L10.32 5.47 L11.28 5.87 L12.45 4.71 L13.74 6.00 L12.58 7.17 L12.98 8.13Z M7.80 9.05 a1.60 1.60 0 1 0 3.20 0 a1.60 1.60 0 1 0 -3.20 0Z" fill="#1038a8" fill-rule="evenodd"/></svg>
<div class="b" style="left:0px;top:113px;width:485px;height:19px;background:#dadada;border:1px solid #c3c3c3;border-left:none;"></div>
<div class="t" style="left:1.5px;top:115px;height:16px;line-height:16px;font-size:11px;color:#000;letter-spacing:-0.416px;">Combo View</div>
<svg class="b" style="left:454px;top:117px" width="28" height="12" viewBox="0 0 28 12"><path d="M2.600 4.800h5v4.700h-5z M5 4.500v-2.800h4.400v4.800h-1.600" stroke="#000" stroke-width="1.300" fill="none"/><path d="M4.400 1.800h5.600M2 5.200h6.200" stroke="#000" stroke-width="1.600"/>
<path d="M18.700 2.600l6.700 5.900M25.400 2.600l-6.700 5.900" stroke="#000" stroke-width="1.500" fill="none"/></svg>
<div class="b" style="left:53px;top:136px;width:47px;height:19px;background:#f0f0f0;border:1px solid #d9d9d9;border-bottom:none;"></div>
<div class="b" style="left:0px;top:155px;width:483px;height:1px;background:#d9d9d9;"></div>
<div class="b" style="left:1px;top:134px;width:53px;height:22px;background:#fff;border:1px solid #d9d9d9;border-bottom:none;"></div>
<div class="t" style="left:11px;top:137.3px;height:16px;line-height:16px;font-size:10.7px;color:#000;letter-spacing:-0.028px;">Model</div>
<div class="t" style="left:63px;top:138.3px;height:16px;line-height:16px;font-size:10.7px;color:#000;letter-spacing:-0.070px;">Tasks</div>
<div class="b" style="left:0px;top:155px;width:483px;height:856px;background:#fff;border:1px solid #dcdcdc;"></div>
<div class="b" style="left:1px;top:559px;width:480px;height:4px;background:#f0f0f0;"></div>
<div class="b" style="left:2px;top:563px;width:477px;height:431px;background:#fff;border:1px solid #e6e6e6;"></div>
<div class="b" style="left:2px;top:156px;width:479px;height:402px;background:#fff;border:1px solid #828790;"></div>
<div class="b" style="left:221px;top:158px;width:1px;height:20px;background:#e5e5e5;"></div>
<div class="t" style="left:7px;top:161px;height:16px;line-height:16px;font-size:12px;color:#000;letter-spacing:0.049px;">Labels &amp; Attributes</div>
<div class="b" style="left:464px;top:157px;width:16px;height:400px;background:#f0f0f0;"></div>
<div class="b" style="left:464px;top:174px;width:15px;height:82px;background:#cdcdcd;"></div>
<svg class="b" style="left:464px;top:157px" width="17" height="17" viewBox="0 0 17 17"><path d="M5 10.5l3.5-3.5 3.5 3.5" stroke="#505050" stroke-width="1.6" fill="none"/></svg>
<svg class="b" style="left:464px;top:540px" width="17" height="17" viewBox="0 0 17 17"><path d="M5 6.5l3.5 3.5 3.5-3.5" stroke="#505050" stroke-width="1.6" fill="none"/></svg>
<div class="b" style="left:63px;top:233px;width:158px;height:18px;background:#e5f3ff;"></div>
<div class="b" style="left:83px;top:269px;width:139px;height:18px;background:#cce8ff;"></div>
<div class="b" style="left:85px;top:269px;width:137px;height:18px;border:1px dotted #000;"></div>
<div class="t" style="left:6px;top:181px;height:16px;line-height:16px;font-size:12px;color:#000;letter-spacing:0.118px;">Application</div>
<svg class="b" style="left:7px;top:201px" width="12" height="10" viewBox="0 0 12 10"><path d="M1.600 2.200l4.300 4.400 4.300 -4.400" stroke="#262626" stroke-width="1.700" fill="none"/></svg>
<svg class="b" style="left:26px;top:198px" width="16" height="16" viewBox="0 0 16 16"><path d="M1.500 15.500h13" stroke="#b0b0b0" stroke-width="1"/><rect x="1.500" y=".5" width="12.500" height="14.500" fill="#ececec" stroke="#c4c4c4"/>
<circle cx="9.300" cy="6" r="3.300" fill="#e02818"/><path d="M6.500 5.500a3 3 0 0 1 5 -1.500" stroke="#f08070" stroke-width=".8" fill="none"/>
<path d="M4.200 7.200l5.800 -.3v5.800l-5.800 .3z" fill="#3c50d8"/><path d="M10 6.900l1.800-1v5.500l-1.800 1.300z" fill="#2030a0"/></svg>
<div class="t" style="left:48px;top:199px;height:16px;line-height:16px;font-size:12px;color:#000;font-weight:bold;letter-spacing:0.110px;">y-motor-bracket</div>
<svg class="b" style="left:27px;top:219px" width="12" height="10" viewBox="0 0 12 10"><path d="M1.600 2.200l4.300 4.400 4.300 -4.400" stroke="#262626" stroke-width="1.700" fill="none"/></svg>
<svg class="b" style="left:46px;top:216px" width="16" height="16" viewBox="0 0 16 16"><path d="M9 14.300l5.500-.8-3.500-1.500z" fill="#303030"/><path d="M6.200 15.100a5.400 5.400 0 0 1 -3.600 -9.500q2.600-1.600 4.200-3.400a4.300 4.300 0 0 1 6.700 5.200q-2.200 2-3 5.500a5.400 5.400 0 0 1 -4.300 2.200z" fill="url(#gBlobB)"/><circle cx="11.500" cy="4.300" r="4.500" fill="#f00000"/><rect x="9.900" y="1.200" width="3.300" height="3.900" fill="#fff"/><rect x="9.900" y="5.900" width="3.300" height="1.800" fill="#fff"/></svg>
<div class="t" style="left:68px;top:217px;height:16px;line-height:16px;font-size:12px;color:#000;letter-spacing:-0.296px;">Group044</div>
<svg class="b" style="left:47px;top:237px" width="12" height="10" viewBox="0 0 12 10"><path d="M1.600 2.200l4.300 4.400 4.300 -4.400" stroke="#262626" stroke-width="1.700" fill="none"/></svg>
<svg class="b" style="left:66px;top:234px" width="16" height="16" viewBox="0 0 16 16"><path d="M9 14.300l5.500-.8-3.500-1.500z" fill="#8c8c8c"/><path d="M6.200 15.100a5.400 5.400 0 0 1 -3.600 -9.500q2.600-1.600 4.200-3.400a4.300 4.300 0 0 1 6.700 5.200q-2.200 2-3 5.500a5.400 5.400 0 0 1 -4.300 2.200z" fill="url(#gBlob)"/><circle cx="11.500" cy="4.300" r="4.500" fill="#f00000"/><rect x="9.900" y="1.200" width="3.300" height="3.900" fill="#fff"/><rect x="9.900" y="5.900" width="3.300" height="1.800" fill="#fff"/></svg>
<div class="t" style="left:88px;top:235px;height:16px;line-height:16px;font-size:12px;color:#7b7b7b;letter-spacing:-0.116px;">difference002</div>
<svg class="b" style="left:86px;top:252px" width="16" height="16" viewBox="0 0 16 16"><path d="M10 14.500l5-1.300-2.500-1.700z" fill="#a8a8a8"/>
<path d="M.8 3.200l8.800 .8v10.400l-8.300-1.400z" fill="url(#gCubeF)"/>
<path d="M.8 3.200l3.500-1.900 8.700 .4-3.400 2.300z" fill="#c2c2c2"/>
<path d="M9.600 4l3.400-2.300 -.3 9.600-3.100 3.100z" fill="#6c6c6c"/></svg>
<div class="t" style="left:108px;top:253px;height:16px;line-height:16px;font-size:12px;color:#7b7b7b;letter-spacing:-0.005px;">cube</div>
<svg class="b" style="left:67px;top:273px" width="12" height="10" viewBox="0 0 12 10"><path d="M1.600 2.200l4.300 4.400 4.300 -4.400" stroke="#262626" stroke-width="1.700" fill="none"/></svg>
<svg class="b" style="left:86px;top:270px" width="16" height="16" viewBox="0 0 16 16"><path d="M9 14.300l5.500-.8-3.500-1.500z" fill="#7d9ab8"/><path d="M6.200 15.100a5.400 5.400 0 0 1 -3.600 -9.500q2.600-1.600 4.200-3.400a4.300 4.300 0 0 1 6.700 5.200q-2.200 2-3 5.500a5.400 5.400 0 0 1 -4.300 2.200z" fill="url(#gBlobS)"/><circle cx="11.500" cy="4.300" r="4.500" fill="#c41a30"/><rect x="9.900" y="1.200" width="3.300" height="3.900" fill="#fff"/><rect x="9.900" y="5.900" width="3.300" height="1.800" fill="#fff"/></svg>
<div class="t" style="left:108px;top:271px;height:16px;line-height:16px;font-size:12px;color:#7b7b7b;letter-spacing:0.128px;">union</div>
<svg class="b" style="left:106px;top:288px" width="16" height="16" viewBox="0 0 16 16"><path d="M9 14.800l6-1.500-3-1.700z" fill="#a8a8a8"/>
<path d="M.8 4.500c0-4.500 12.200-4 12.200 0l-.5 8c-.5 3.500-10.500 3.800-11.200 0z" fill="url(#gBlob)"/>
<ellipse cx="6.900" cy="4.200" rx="5.900" ry="2.900" fill="#b4b4b4" stroke="#7e7e7e" stroke-width=".6"/></svg>
<div class="t" style="left:128px;top:289px;height:16px;line-height:16px;font-size:12px;color:#7b7b7b;letter-spacing:0.081px;">cylinder</div>
<svg class="b" style="left:106px;top:306px" width="16" height="16" viewBox="0 0 16 16"><path d="M10 14.500l5-1.300-2.500-1.700z" fill="#a8a8a8"/>
<path d="M.8 3.200l8.800 .8v10.400l-8.300-1.400z" fill="url(#gCubeF)"/>
<path d="M.8 3.200l3.500-1.900 8.700 .4-3.400 2.300z" fill="#c2c2c2"/>
<path d="M9.600 4l3.400-2.300 -.3 9.600-3.100 3.100z" fill="#6c6c6c"/></svg>
<div class="t" style="left:128px;top:307px;height:16px;line-height:16px;font-size:12px;color:#7b7b7b;letter-spacing:-0.434px;">cube001</div>
<svg class="b" style="left:106px;top:324px" width="16" height="16" viewBox="0 0 16 16"><path d="M10 14.500l5-1.300-2.500-1.700z" fill="#a8a8a8"/>
<path d="M.8 3.200l8.800 .8v10.400l-8.300-1.400z" fill="url(#gCubeF)"/>
<path d="M.8 3.200l3.500-1.900 8.700 .4-3.400 2.300z" fill="#c2c2c2"/>
<path d="M9.600 4l3.400-2.300 -.3 9.600-3.100 3.100z" fill="#6c6c6c"/></svg>
<div class="t" style="left:128px;top:325px;height:16px;line-height:16px;font-size:12px;color:#7b7b7b;letter-spacing:-0.292px;">cube002</div>
<svg class="b" style="left:106px;top:342px" width="16" height="16" viewBox="0 0 16 16"><path d="M10 14.500l5-1.300-2.500-1.700z" fill="#a8a8a8"/>
<path d="M.8 3.200l8.800 .8v10.400l-8.300-1.400z" fill="url(#gCubeF)"/>
<path d="M.8 3.200l3.500-1.900 8.700 .4-3.400 2.300z" fill="#c2c2c2"/>
<path d="M9.600 4l3.400-2.300 -.3 9.600-3.100 3.100z" fill="#6c6c6c"/></svg>
<div class="t" style="left:128px;top:343px;height:16px;line-height:16px;font-size:12px;color:#7b7b7b;letter-spacing:-0.292px;">cube003</div>
<svg class="b" style="left:106px;top:360px" width="16" height="16" viewBox="0 0 16 16"><path d="M10 14.500l5-1.300-2.500-1.700z" fill="#a8a8a8"/>
<path d="M.8 3.200l8.800 .8v10.400l-8.300-1.400z" fill="url(#gCubeF)"/>
<path d="M.8 3.200l3.500-1.900 8.700 .4-3.400 2.300z" fill="#c2c2c2"/>
<path d="M9.600 4l3.400-2.300 -.3 9.600-3.100 3.100z" fill="#6c6c6c"/></svg>
<div class="t" style="left:128px;top:361px;height:16px;line-height:16px;font-size:12px;color:#7b7b7b;letter-spacing:-0.292px;">cube004</div>
<svg class="b" style="left:88px;top:380.5px" width="10" height="12" viewBox="0 0 10 12"><path d="M2.300 1.500l4.300 4.300 -4.300 4.300" stroke="#9c9c9c" stroke-width="1.500" fill="none"/></svg>
<svg class="b" style="left:106px;top:378px" width="16" height="16" viewBox="0 0 16 16"><path d="M9 14.300l5.500-.8-3.500-1.500z" fill="#8c8c8c"/><path d="M6.200 15.100a5.400 5.400 0 0 1 -3.600 -9.500q2.600-1.600 4.200-3.400a4.300 4.300 0 0 1 6.700 5.200q-2.200 2-3 5.500a5.400 5.400 0 0 1 -4.300 2.200z" fill="url(#gBlob)"/></svg>
<div class="t" style="left:128px;top:379px;height:16px;line-height:16px;font-size:12px;color:#7b7b7b;letter-spacing:-0.296px;">Group002</div>
<svg class="b" style="left:88px;top:398.5px" width="10" height="12" viewBox="0 0 10 12"><path d="M2.300 1.500l4.300 4.300 -4.300 4.300" stroke="#9c9c9c" stroke-width="1.500" fill="none"/></svg>
<svg class="b" style="left:106px;top:396px" width="16" height="16" viewBox="0 0 16 16"><path d="M9 14.300l5.500-.8-3.500-1.500z" fill="#8c8c8c"/><path d="M6.200 15.100a5.400 5.400 0 0 1 -3.600 -9.500q2.600-1.600 4.200-3.400a4.300 4.300 0 0 1 6.700 5.200q-2.200 2-3 5.500a5.400 5.400 0 0 1 -4.300 2.200z" fill="url(#gBlob)"/></svg>
<div class="t" style="left:128px;top:397px;height:16px;line-height:16px;font-size:12px;color:#7b7b7b;letter-spacing:-0.296px;">Group003</div>
<svg class="b" style="left:87px;top:417px" width="12" height="10" viewBox="0 0 12 10"><path d="M1.600 2.200l4.300 4.400 4.300 -4.400" stroke="#262626" stroke-width="1.700" fill="none"/></svg>
<svg class="b" style="left:106px;top:414px" width="16" height="16" viewBox="0 0 16 16"><path d="M9 14.300l5.500-.8-3.500-1.500z" fill="#8c8c8c"/><path d="M6.200 15.100a5.400 5.400 0 0 1 -3.600 -9.500q2.600-1.600 4.200-3.400a4.300 4.300 0 0 1 6.700 5.200q-2.200 2-3 5.500a5.400 5.400 0 0 1 -4.300 2.200z" fill="url(#gBlob)"/><circle cx="11.500" cy="4.300" r="4.500" fill="#f00000"/><rect x="9.900" y="1.200" width="3.300" height="3.900" fill="#fff"/><rect x="9.900" y="5.900" width="3.300" height="1.800" fill="#fff"/></svg>
<div class="t" style="left:128px;top:415px;height:16px;line-height:16px;font-size:12px;color:#7b7b7b;letter-spacing:-0.296px;">Group010</div>
<svg class="b" style="left:107px;top:435px" width="12" height="10" viewBox="0 0 12 10"><path d="M1.600 2.200l4.300 4.400 4.300 -4.400" stroke="#262626" stroke-width="1.700" fill="none"/></svg>
<svg class="b" style="left:126px;top:432px" width="16" height="16" viewBox="0 0 16 16"><path d="M9 14.300l5.500-.8-3.500-1.500z" fill="#8c8c8c"/><path d="M6.200 15.100a5.400 5.400 0 0 1 -3.600 -9.500q2.600-1.600 4.200-3.400a4.300 4.300 0 0 1 6.700 5.200q-2.200 2-3 5.500a5.400 5.400 0 0 1 -4.300 2.200z" fill="url(#gBlob)"/><circle cx="11.500" cy="4.300" r="4.500" fill="#f00000"/><rect x="9.900" y="1.200" width="3.300" height="3.900" fill="#fff"/><rect x="9.900" y="5.900" width="3.300" height="1.800" fill="#fff"/></svg>
<div class="t" style="left:148px;top:433px;height:16px;line-height:16px;font-size:12px;color:#7b7b7b;letter-spacing:-0.296px;">Group006</div>
<svg class="b" style="left:128px;top:452.5px" width="10" height="12" viewBox="0 0 10 12"><path d="M2.300 1.500l4.300 4.300 -4.300 4.300" stroke="#9c9c9c" stroke-width="1.500" fill="none"/></svg>
<svg class="b" style="left:146px;top:450px" width="16" height="16" viewBox="0 0 16 16"><path d="M9 14.300l5.500-.8-3.500-1.500z" fill="#8c8c8c"/><path d="M6.200 15.100a5.400 5.400 0 0 1 -3.600 -9.500q2.600-1.600 4.200-3.400a4.300 4.300 0 0 1 6.700 5.200q-2.200 2-3 5.500a5.400 5.400 0 0 1 -4.300 2.200z" fill="url(#gBlob)"/><circle cx="11.500" cy="4.300" r="4.500" fill="#f00000"/><rect x="9.900" y="1.200" width="3.300" height="3.900" fill="#fff"/><rect x="9.900" y="5.900" width="3.300" height="1.800" fill="#fff"/></svg>
<div class="t" style="left:168px;top:451px;height:16px;line-height:16px;font-size:12px;color:#7b7b7b;letter-spacing:-0.296px;">Group004</div>
<svg class="b" style="left:128px;top:470.5px" width="10" height="12" viewBox="0 0 10 12"><path d="M2.300 1.500l4.300 4.300 -4.300 4.300" stroke="#9c9c9c" stroke-width="1.500" fill="none"/></svg>
<svg class="b" style="left:146px;top:468px" width="16" height="16" viewBox="0 0 16 16"><path d="M9 14.300l5.500-.8-3.500-1.500z" fill="#8c8c8c"/><path d="M6.200 15.100a5.400 5.400 0 0 1 -3.600 -9.500q2.600-1.600 4.200-3.400a4.300 4.300 0 0 1 6.700 5.200q-2.200 2-3 5.500a5.400 5.400 0 0 1 -4.300 2.200z" fill="url(#gBlob)"/><circle cx="11.500" cy="4.300" r="4.500" fill="#f00000"/><rect x="9.900" y="1.200" width="3.300" height="3.900" fill="#fff"/><rect x="9.900" y="5.900" width="3.300" height="1.800" fill="#fff"/></svg>
<div class="t" style="left:168px;top:469px;height:16px;line-height:16px;font-size:12px;color:#7b7b7b;letter-spacing:-0.296px;">Group005</div>
<svg class="b" style="left:108px;top:488.5px" width="10" height="12" viewBox="0 0 10 12"><path d="M2.300 1.500l4.300 4.300 -4.300 4.300" stroke="#9c9c9c" stroke-width="1.500" fill="none"/></svg>
<svg class="b" style="left:126px;top:486px" width="16" height="16" viewBox="0 0 16 16"><path d="M9 14.300l5.500-.8-3.500-1.500z" fill="#8c8c8c"/><path d="M6.200 15.100a5.400 5.400 0 0 1 -3.600 -9.500q2.600-1.600 4.200-3.400a4.300 4.300 0 0 1 6.700 5.200q-2.200 2-3 5.500a5.400 5.400 0 0 1 -4.300 2.200z" fill="url(#gBlob)"/><circle cx="11.500" cy="4.300" r="4.500" fill="#f00000"/><rect x="9.900" y="1.200" width="3.300" height="3.900" fill="#fff"/><rect x="9.900" y="5.900" width="3.300" height="1.800" fill="#fff"/></svg>
<div class="t" style="left:148px;top:487px;height:16px;line-height:16px;font-size:12px;color:#7b7b7b;letter-spacing:-0.296px;">Group009</div>
<svg class="b" style="left:48px;top:506.5px" width="10" height="12" viewBox="0 0 10 12"><path d="M2.300 1.500l4.300 4.300 -4.300 4.300" stroke="#9c9c9c" stroke-width="1.500" fill="none"/></svg>
<svg class="b" style="left:66px;top:504px" width="16" height="16" viewBox="0 0 16 16"><path d="M9 14.300l5.500-.8-3.500-1.500z" fill="#8c8c8c"/><path d="M6.200 15.100a5.400 5.400 0 0 1 -3.600 -9.500q2.600-1.600 4.200-3.400a4.300 4.300 0 0 1 6.700 5.200q-2.200 2-3 5.500a5.400 5.400 0 0 1 -4.300 2.200z" fill="url(#gBlob)"/><circle cx="11.500" cy="4.300" r="4.500" fill="#f00000"/><rect x="9.900" y="1.200" width="3.300" height="3.900" fill="#fff"/><rect x="9.900" y="5.900" width="3.300" height="1.800" fill="#fff"/></svg>
<div class="t" style="left:88px;top:505px;height:16px;line-height:16px;font-size:12px;color:#7b7b7b;letter-spacing:-0.421px;">Group021</div>
<svg class="b" style="left:48px;top:524.5px" width="10" height="12" viewBox="0 0 10 12"><path d="M2.300 1.500l4.300 4.300 -4.300 4.300" stroke="#9c9c9c" stroke-width="1.500" fill="none"/></svg>
<svg class="b" style="left:66px;top:522px" width="16" height="16" viewBox="0 0 16 16"><path d="M9 14.300l5.500-.8-3.500-1.500z" fill="#8c8c8c"/><path d="M6.200 15.100a5.400 5.400 0 0 1 -3.600 -9.500q2.600-1.600 4.200-3.400a4.300 4.300 0 0 1 6.700 5.200q-2.200 2-3 5.500a5.400 5.400 0 0 1 -4.300 2.200z" fill="url(#gBlob)"/></svg>
<div class="t" style="left:88px;top:523px;height:16px;line-height:16px;font-size:12px;color:#7b7b7b;letter-spacing:0.064px;">union011</div>
<svg class="b" style="left:48px;top:542.5px" width="10" height="12" viewBox="0 0 10 12"><path d="M2.300 1.500l4.300 4.300 -4.300 4.300" stroke="#9c9c9c" stroke-width="1.500" fill="none"/></svg>
<svg class="b" style="left:66px;top:540px" width="16" height="16" viewBox="0 0 16 16"><path d="M9 14.300l5.500-.8-3.500-1.500z" fill="#8c8c8c"/><path d="M6.200 15.100a5.400 5.400 0 0 1 -3.600 -9.500q2.600-1.600 4.200-3.400a4.300 4.300 0 0 1 6.700 5.200q-2.200 2-3 5.500a5.400 5.400 0 0 1 -4.300 2.200z" fill="url(#gBlob)"/><circle cx="11.500" cy="4.300" r="4.500" fill="#f00000"/><rect x="9.900" y="1.200" width="3.300" height="3.900" fill="#fff"/><rect x="9.900" y="5.900" width="3.300" height="1.800" fill="#fff"/></svg>
<div class="t" style="left:88px;top:541px;height:16px;line-height:16px;font-size:12px;color:#7b7b7b;letter-spacing:-0.296px;">Group038</div>
<div class="b" style="left:4px;top:565px;width:473px;height:426px;background:#fff;border:1px solid #828790;"></div>
<div class="t" style="left:9px;top:570px;height:16px;line-height:16px;font-size:12px;color:#000;letter-spacing:-0.044px;">Property</div>
<div class="t" style="left:109px;top:570px;height:16px;line-height:16px;font-size:12px;color:#000;letter-spacing:-0.160px;">Value</div>
<div class="b" style="left:104px;top:567px;width:1px;height:22px;background:#e5e5e5;"></div>
<div class="b" style="left:5px;top:589px;width:471px;height:20px;background:#a0a0a0;"></div>
<div class="t" style="left:28px;top:591.5px;height:16px;line-height:16px;font-size:12px;color:#fff;font-weight:bold;letter-spacing:-0.921px;">Base</div>
<div class="b" style="left:5px;top:609px;width:471px;height:19px;background:#f6f6f6;"></div>
<div class="b" style="left:25px;top:628px;width:451px;height:1px;background:#d4d4d4;"></div>
<div class="b" style="left:104px;top:609px;width:1px;height:20px;background:#d4d4d4;"></div>
<div class="t" style="left:28px;top:612px;height:16px;line-height:16px;font-size:12px;color:#000;letter-spacing:-0.098px;">Angular Def...</div>
<div class="t" style="left:108px;top:612px;height:16px;line-height:16px;font-size:12px;color:#000;letter-spacing:-0.452px;">28,50 °</div>
<div class="b" style="left:25px;top:648px;width:451px;height:1px;background:#d4d4d4;"></div>
<div class="b" style="left:104px;top:629px;width:1px;height:20px;background:#d4d4d4;"></div>
<div class="t" style="left:28px;top:632px;height:16px;line-height:16px;font-size:12px;color:#000;letter-spacing:0.023px;">Bounding Box</div>
<div class="t" style="left:108px;top:632px;height:16px;line-height:16px;font-size:12px;color:#000;letter-spacing:-0.269px;">false</div>
<div class="b" style="left:5px;top:649px;width:471px;height:19px;background:#f6f6f6;"></div>
<div class="b" style="left:25px;top:668px;width:451px;height:1px;background:#d4d4d4;"></div>
<div class="b" style="left:104px;top:649px;width:1px;height:20px;background:#d4d4d4;"></div>
<div class="t" style="left:28px;top:652px;height:16px;line-height:16px;font-size:12px;color:#000;letter-spacing:-0.114px;">Deviation</div>
<div class="t" style="left:108px;top:652px;height:16px;line-height:16px;font-size:12px;color:#000;letter-spacing:-0.589px;">0,50</div>
<div class="b" style="left:25px;top:688px;width:451px;height:1px;background:#d4d4d4;"></div>
<div class="b" style="left:104px;top:669px;width:1px;height:20px;background:#d4d4d4;"></div>
<div class="t" style="left:28px;top:672px;height:16px;line-height:16px;font-size:12px;color:#000;letter-spacing:-0.058px;">Display Mode</div>
<div class="t" style="left:108px;top:672px;height:16px;line-height:16px;font-size:12px;color:#000;letter-spacing:-0.302px;">Flat Lines</div>
<div class="b" style="left:5px;top:689px;width:471px;height:19px;background:#f6f6f6;"></div>
<div class="b" style="left:25px;top:708px;width:451px;height:1px;background:#d4d4d4;"></div>
<div class="b" style="left:104px;top:689px;width:1px;height:20px;background:#d4d4d4;"></div>
<div class="t" style="left:28px;top:692px;height:16px;line-height:16px;font-size:12px;color:#000;letter-spacing:-0.301px;">Draw Style</div>
<div class="t" style="left:108px;top:692px;height:16px;line-height:16px;font-size:12px;color:#000;letter-spacing:-0.137px;">Solid</div>
<div class="b" style="left:25px;top:728px;width:451px;height:1px;background:#d4d4d4;"></div>
<div class="b" style="left:104px;top:709px;width:1px;height:20px;background:#d4d4d4;"></div>
<div class="t" style="left:28px;top:712px;height:16px;line-height:16px;font-size:12px;color:#000;letter-spacing:0.121px;">Lighting</div>
<div class="t" style="left:108px;top:712px;height:16px;line-height:16px;font-size:12px;color:#000;letter-spacing:-0.044px;">Two side</div>
<div class="b" style="left:5px;top:729px;width:471px;height:20px;background:#f6f6f6;"></div>
<div class="b" style="left:25px;top:749px;width:451px;height:1px;background:#d4d4d4;"></div>
<div class="b" style="left:104px;top:729px;width:1px;height:21px;background:#d4d4d4;"></div>
<div class="t" style="left:28px;top:731.5px;height:16px;line-height:16px;font-size:12px;color:#000;letter-spacing:-0.070px;">Line Color</div>
<div class="b" style="left:108px;top:731px;width:16px;height:16px;background:#191919;"></div>
<div class="t" style="left:130px;top:731.5px;height:16px;line-height:16px;font-size:12px;color:#000;letter-spacing:-0.337px;">[25, 25, 25]</div>
<div class="b" style="left:25px;top:769px;width:451px;height:1px;background:#d4d4d4;"></div>
<div class="b" style="left:104px;top:750px;width:1px;height:20px;background:#d4d4d4;"></div>
<div class="t" style="left:28px;top:753px;height:16px;line-height:16px;font-size:12px;color:#000;letter-spacing:-0.069px;">Line Width</div>
<div class="t" style="left:108px;top:753px;height:16px;line-height:16px;font-size:12px;color:#000;letter-spacing:-0.589px;">2,00</div>
<div class="b" style="left:5px;top:770px;width:471px;height:20px;background:#f6f6f6;"></div>
<div class="b" style="left:25px;top:790px;width:451px;height:1px;background:#d4d4d4;"></div>
<div class="b" style="left:104px;top:770px;width:1px;height:21px;background:#d4d4d4;"></div>
<div class="t" style="left:28px;top:772.5px;height:16px;line-height:16px;font-size:12px;color:#000;letter-spacing:0.058px;">Point Color</div>
<div class="b" style="left:108px;top:772px;width:16px;height:16px;background:#191919;"></div>
<div class="t" style="left:130px;top:772.5px;height:16px;line-height:16px;font-size:12px;color:#000;letter-spacing:-0.337px;">[25, 25, 25]</div>
<div class="b" style="left:25px;top:810px;width:451px;height:1px;background:#d4d4d4;"></div>
<div class="b" style="left:104px;top:791px;width:1px;height:20px;background:#d4d4d4;"></div>
<div class="t" style="left:28px;top:794px;height:16px;line-height:16px;font-size:12px;color:#000;letter-spacing:-0.303px;">Point Size</div>
<div class="t" style="left:108px;top:794px;height:16px;line-height:16px;font-size:12px;color:#000;letter-spacing:-0.589px;">2,00</div>
<div class="b" style="left:5px;top:811px;width:471px;height:19px;background:#f6f6f6;"></div>
<div class="b" style="left:25px;top:830px;width:451px;height:1px;background:#d4d4d4;"></div>
<div class="b" style="left:104px;top:811px;width:1px;height:20px;background:#d4d4d4;"></div>
<div class="t" style="left:28px;top:814px;height:16px;line-height:16px;font-size:12px;color:#000;letter-spacing:-0.304px;">Selectable</div>
<div class="t" style="left:108px;top:814px;height:16px;line-height:16px;font-size:12px;color:#000;letter-spacing:0.330px;">true</div>
<div class="b" style="left:25px;top:851px;width:451px;height:1px;background:#d4d4d4;"></div>
<div class="b" style="left:104px;top:831px;width:1px;height:21px;background:#d4d4d4;"></div>
<div class="t" style="left:28px;top:833.5px;height:16px;line-height:16px;font-size:12px;color:#000;letter-spacing:-0.337px;">Shape Color</div>
<div class="b" style="left:108px;top:833px;width:16px;height:16px;background:#cccccc;"></div>
<div class="t" style="left:130px;top:833.5px;height:16px;line-height:16px;font-size:12px;color:#000;letter-spacing:-0.404px;">[204, 204, 204]</div>
<div class="b" style="left:5px;top:852px;width:471px;height:19px;background:#f6f6f6;"></div>
<div class="b" style="left:25px;top:871px;width:451px;height:1px;background:#d4d4d4;"></div>
<div class="b" style="left:104px;top:852px;width:1px;height:20px;background:#d4d4d4;"></div>
<div class="t" style="left:28px;top:855px;height:16px;line-height:16px;font-size:12px;color:#000;letter-spacing:-0.327px;">Transparency</div>
<div class="t" style="left:108px;top:855px;height:16px;line-height:16px;font-size:12px;color:#000;letter-spacing:-0.673px;">0</div>
<div class="b" style="left:25px;top:891px;width:451px;height:1px;background:#d4d4d4;"></div>
<div class="b" style="left:104px;top:872px;width:1px;height:20px;background:#d4d4d4;"></div>
<div class="t" style="left:28px;top:875px;height:16px;line-height:16px;font-size:12px;color:#000;letter-spacing:0.088px;">Visibility</div>
<div class="t" style="left:108px;top:875px;height:16px;line-height:16px;font-size:12px;color:#000;letter-spacing:-0.269px;">false</div>
<svg class="b" style="left:0px;top:990px" width="110" height="20" viewBox="0 0 110 20"><path d="M2 3.500 C5.500 3.500 4.500 17.500 9.500 17.500 H39 C44.500 17.500 44 3.500 47.500 3" stroke="#000" stroke-width="1.200" fill="#fff"/>
<path d="M48 3.500 C51.500 4 50.500 16.300 55.500 16.300 H86 C91.500 16.300 90.500 4 94 3.500" stroke="#111" stroke-width="1.200" fill="none"/></svg>
<div class="t" style="left:13.5px;top:993.3px;height:16px;line-height:16px;font-size:10.5px;color:#000;letter-spacing:-0.017px;">View</div>
<div class="t" style="left:59px;top:992.3px;height:16px;line-height:16px;font-size:10.5px;color:#000;letter-spacing:0.455px;">Data</div>
<svg class="b" style="left:489px;top:112px" width="1431" height="876" viewBox="489 112 1431 876">
<defs><linearGradient id="bg" x1="0" y1="0" x2="0" y2="1"><stop offset="0" stop-color="#333365"/><stop offset="1" stop-color="#9797aa"/></linearGradient></defs>
<rect x="489" y="112" width="1431" height="876" fill="url(#bg)"/>
<g fill="none" stroke="#000" shape-rendering="crispEdges">
<path d="M1240.9 207.0L1393.6 207.0" stroke-width="2.00"/>
<path d="M1392.6 206.6L1477.4 291.9" stroke-width="1.42"/>
<path d="M1477.0 290.9L1477.0 677.6" stroke-width="2.00"/>
<path d="M1477.6 677.0L1147.4 677.0" stroke-width="2.00"/>
<path d="M1147.9 677.6L1241.6 206.4" stroke-width="1.96"/>
<path d="M1147.7 677.5L1242.3 488.5" stroke-width="1.79"/>
<path d="M1241.4 489.0L1307.6 489.0" stroke-width="2.00"/>
<path d="M1306.6 488.6L1401.4 582.4" stroke-width="1.42"/>
<path d="M1401.0 581.4L1401.0 677.6" stroke-width="2.00"/>
<path d="M1057.4 461.0L1238.1 461.0" stroke-width="2.00"/>
<path d="M1237.1 460.6L1300.9 524.4" stroke-width="1.41"/>
<path d="M1300.3 523.4L1363.7 677.6" stroke-width="1.85"/>
<path d="M1363.7 676.4L1300.8 829.6" stroke-width="1.85"/>
<path d="M1301.6 828.8L1147.4 892.7" stroke-width="1.85"/>
<path d="M1148.6 892.7L994.4 828.8" stroke-width="1.85"/>
<path d="M995.2 829.6L931.8 676.4" stroke-width="1.85"/>
<path d="M931.8 677.6L995.2 523.4" stroke-width="1.85"/>
<path d="M994.6 524.4L1058.4 460.6" stroke-width="1.41"/>
</g>
<g>
<path d="M1876 942V915" stroke="#1a8a1a" stroke-width="1.6"/><path d="M1876 914l-3.5 10h7z" fill="#1a8a1a"/>
<path d="M1877 944H1904" stroke="#8a1a1a" stroke-width="1.6"/><path d="M1907 944l-10 -3.5v7z" fill="#8a1a1a"/>
<path d="M1876 940l4.5 4.500 -4.500 4.500 -4.500 -4.500z" fill="#1a1a8a"/>
<text x="1878" y="915" font-family="Liberation Sans, sans-serif" font-size="9.500" fill="#000">Y</text>
<text x="1878.500" y="945" font-family="Liberation Sans, sans-serif" font-size="9.500" fill="#000">Z</text>
<text x="1908" y="945" font-family="Liberation Sans, sans-serif" font-size="9.500" fill="#000">X</text>
</g>
</svg>
<div class="b" style="left:489px;top:988px;width:1431px;height:1px;background:#a0a0a0;"></div>
<div class="b" style="left:489px;top:989px;width:1431px;height:1px;background:#fafafa;"></div>
<div class="b" style="left:491px;top:988px;width:112px;height:22px;background:#f0f0f0;border:1px solid #d9d9d9;border-top:none;"></div>
<div class="b" style="left:602px;top:988px;width:166px;height:24px;background:#fff;border:1px solid #e2e2e2;border-top:none;"></div>
<div class="t" style="left:520px;top:991.8px;height:16px;line-height:16px;font-size:10.7px;color:#000;letter-spacing:0.213px;">Start page</div>
<div class="t" style="left:635.5px;top:992.3px;height:16px;line-height:16px;font-size:10.7px;color:#000;letter-spacing:0.352px;">y-motor-bracket : 1*</div>
<div class="b" style="left:576px;top:992px;width:14px;height:14px;background:#c6c6c6;border:1px solid #a0a0a0;border-radius:2.500px;"></div>
<svg class="b" style="left:576px;top:992px" width="14" height="14" viewBox="0 0 14 14"><path d="M4 4l6 6M10 4l-6 6" stroke="#fff" stroke-width="2"/></svg>
<div class="b" style="left:740px;top:993px;width:14px;height:14px;background:#e17c52;border:1px solid #d23a26;border-radius:2.500px;"></div>
<svg class="b" style="left:740px;top:993px" width="14" height="14" viewBox="0 0 14 14"><path d="M4 4l6 6M10 4l-6 6" stroke="#fff" stroke-width="2"/></svg>
<svg class="b" style="left:501px;top:990px" width="16" height="16" viewBox="0 0 16 16"><ellipse cx="8" cy="14.800" rx="5.500" ry=".8" fill="#c4c8d8"/><circle cx="8" cy="7.900" r="7" fill="url(#gGlobe2)"/>
<path d="M5 3.500c1-1 2.500-1.500 3.500-1.200l.5 1.500-1.500 .5 .5 1.500-1.500 .3-1-1zM8 7.500l2.500 .5 1 2-1 2.500-1.500 1-.8-3z" fill="#fff" opacity=".92"/></svg>
<svg class="b" style="left:616px;top:991.5px" width="14.4" height="14.4" viewBox="0 0 16 16"><path d="M.7 1h7.700v3.700h-4.500v2h3v2.800h-3v3.800h-3.200z" fill="#f21a0a"/><path d="M14.62 8.14 L14.62 9.96 L12.98 9.97 L12.58 10.93 L13.74 12.10 L12.45 13.39 L11.28 12.23 L10.32 12.63 L10.31 14.27 L8.49 14.27 L8.48 12.63 L7.52 12.23 L6.35 13.39 L5.06 12.10 L6.22 10.93 L5.82 9.97 L4.18 9.96 L4.18 8.14 L5.82 8.13 L6.22 7.17 L5.06 6.00 L6.35 4.71 L7.52 5.87 L8.48 5.47 L8.49 3.83 L10.31 3.83 L10.32 5.47 L11.28 5.87 L12.45 4.71 L13.74 6.00 L12.58 7.17 L12.98 8.13Z M7.80 9.05 a1.60 1.60 0 1 0 3.20 0 a1.60 1.60 0 1 0 -3.20 0Z" fill="#1038a8" fill-rule="evenodd"/></svg>
<div class="t" style="left:6px;top:1018px;height:16px;line-height:16px;font-size:12px;color:#000;letter-spacing:0.041px;">A fatal error occurred when running boolean operation</div>
<div class="t" style="left:1799px;top:1019px;height:16px;line-height:16px;font-size:12px;color:#000;letter-spacing:-0.359px;">15.24 x 9.33 mm</div>
<div class="b" style="left:227px;top:234px;width:299px;height:19px;background:rgba(0,0,0,0.5);filter:blur(1.800px);"></div>
<div class="b" style="left:222px;top:230px;width:302px;height:20px;background:#fff;border:1px solid #767676;"></div>
<div class="t" style="left:228px;top:232px;height:16px;line-height:16px;font-size:12px;color:#575757;letter-spacing:0.041px;">A fatal error occurred when running boolean operation</div>
</body></html>
